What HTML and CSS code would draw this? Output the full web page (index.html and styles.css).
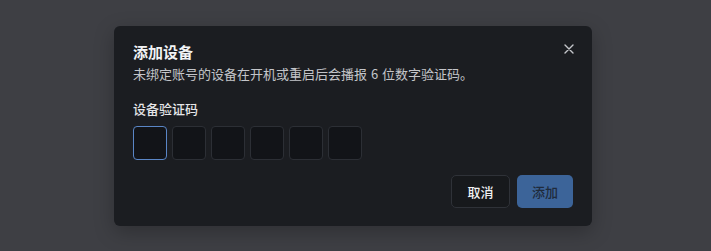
FILE: index.html
```html
<!DOCTYPE html>
<html lang="zh-CN">
  <head>
    <meta charset="UTF-8" />
    <title>添加设备</title>
    <link rel="stylesheet" href="styles.css">
  </head>
  <body>
    <div class="overlay">
      <div class="dialog">
        <div class="dialog-header">
          <div>
            <h2 class="dialog-title">添加设备</h2>
            <p class="dialog-desc">未绑定账号的设备在开机或重启后会播报 6 位数字验证码。</p>
          </div>
          <button class="close-btn" aria-label="关闭">
            <svg width="10" height="10" viewBox="0 0 10 10">
              <path d="M1 1 L9 9 M9 1 L1 9" stroke="#c4c6ca" stroke-width="1.4" stroke-linecap="round" />
            </svg>
          </button>
        </div>

        <label class="field-label">设备验证码</label>
        <div class="code-inputs">
          <input class="code-box active" maxlength="1" />
          <input class="code-box" maxlength="1" />
          <input class="code-box" maxlength="1" />
          <input class="code-box" maxlength="1" />
          <input class="code-box" maxlength="1" />
          <input class="code-box" maxlength="1" />
        </div>

        <div class="dialog-footer">
          <button class="btn btn-cancel">取消</button>
          <button class="btn btn-primary" disabled>添加</button>
        </div>
      </div>
    </div>
  </body>
</html>
```

FILE: styles.css
```css
* {
  margin: 0;
  padding: 0;
  box-sizing: border-box;
}

body {
  font-family: 'Noto Sans CJK SC', 'Noto Sans', sans-serif;
  background: #3e3f44;
  color: #e6e7e9;
  width: 711px;
  height: 251px;
  overflow: hidden;
}

.overlay {
  padding-top: 26px;
  padding-left: 114px;
}

.dialog {
  width: 478px;
  height: 200px;
  background: #1b1d21;
  border-radius: 6px;
  padding: 15px 19px 18px 19px;
  box-shadow: 0 6px 20px rgba(0, 0, 0, 0.25);
}

.dialog-header {
  display: flex;
  justify-content: space-between;
  align-items: flex-start;
}

.dialog-title {
  font-size: 15px;
  font-weight: 700;
  line-height: 22px;
  color: #f2f3f5;
}

.dialog-desc {
  font-size: 13px;
  line-height: 20px;
  color: #c3c5c9;
  margin-top: 1px;
  word-spacing: 1px;
}

.close-btn {
  background: none;
  border: none;
  width: 16px;
  height: 16px;
  display: flex;
  align-items: center;
  justify-content: center;
  margin-top: 0;
  margin-right: -4px;
  cursor: pointer;
}

.field-label {
  display: block;
  font-size: 13px;
  font-weight: 500;
  line-height: 18px;
  color: #e6e7e9;
  margin-top: 16px;
}

.code-inputs {
  display: flex;
  gap: 5px;
  margin-top: 8px;
}

.code-box {
  width: 34px;
  height: 34px;
  background: #121418;
  border: 1px solid #2c2f35;
  border-radius: 4px;
  color: #fff;
  text-align: center;
  font-size: 16px;
  outline: none;
}

.code-box.active {
  border: 1.5px solid #5a86c6;
}

.dialog-footer {
  display: flex;
  justify-content: flex-end;
  gap: 7px;
  margin-top: 15px;
}

.btn {
  height: 33px;
  border-radius: 5px;
  font-family: inherit;
  font-size: 13px;
  font-weight: 500;
  cursor: pointer;
}

.btn-cancel {
  width: 59px;
  background: #17191c;
  border: 1px solid #2f3238;
  color: #f0f1f3;
}

.btn-primary {
  width: 56px;
  background: #3c6499;
  border: none;
  color: #1f2b3c;
}
```
